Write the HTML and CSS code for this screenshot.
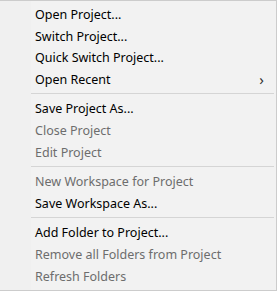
FILE: index.html
```html
<!DOCTYPE html>
<html lang="en">
<head>
    <meta charset="UTF-8">
    <title>Project menu</title>
    <link rel="stylesheet" href="styles.css">
</head>
<body>
    <!-- 项目菜单 -->
    <ul class="menu">
        <li class="item">Open Project...</li>
        <li class="item">Switch Project...</li>
        <li class="item">Quick Switch Project...</li>
        <li class="item sub">Open Recent <span class="arrow">&#x203A;</span></li>
        <li class="sep"></li>
        <li class="item">Save Project As...</li>
        <li class="item off">Close Project</li>
        <li class="item off">Edit Project</li>
        <li class="sep"></li>
        <li class="item off">New Workspace for Project</li>
        <li class="item">Save Workspace As...</li>
        <li class="sep"></li>
        <li class="item">Add Folder to Project...</li>
        <li class="item off">Remove all Folders from Project</li>
        <li class="item off">Refresh Folders</li>
    </ul>
</body>
</html>
```

FILE: styles.css
```css
body {
    margin: 0;
    padding: 0;
    background: #f2f2f2;
}
.menu {
    list-style-type: none;
    margin: 0;
    padding: 3px 0 4px 0;
    width: 277px;
    height: 291px;
    box-sizing: border-box;
    border: 1px solid #cccccc;
    border-left: none;
    background: linear-gradient(to right, #f0f0f0 31px, #f2f2f2 31px);
    font-family: "Noto Sans", "Open Sans", sans-serif;
    font-size: 12.5px;
    color: #000;
}
.item {
    height: 21.6px;
    line-height: 21.6px;
    padding-left: 35px;
    display: flex;
    justify-content: space-between;
}
.off {
    color: #6d6d6d;
}
.arrow {
    padding-right: 12px;
    font-size: 15px;
    color: #333;
}
.sep {
    height: 1px;
    margin: 3px 2px 4px 31px;
    background: #d5d5d5;
}
```
